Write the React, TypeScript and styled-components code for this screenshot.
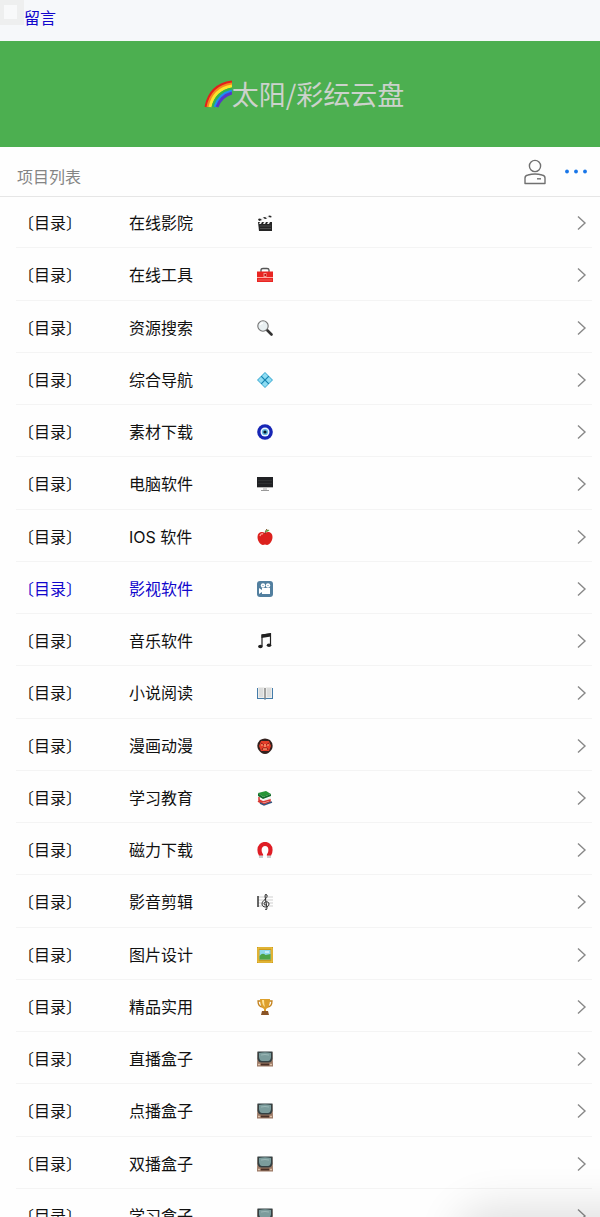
import React from "react";
import styled, { createGlobalStyle } from "styled-components";

const GlobalStyle = createGlobalStyle`
  * { box-sizing: border-box; }
  body {
    margin: 0;
    background: #fefefe;
    color: #111;
    font-family: Inter, "Noto Sans CJK SC", sans-serif;
    font-size: 16px;
  }
`;

const Page = styled.div`
  display: flex;
  flex-direction: column;
  height: 100vh;
  overflow: hidden;
`;

const TopBar = styled.nav`
  display: flex;
  align-items: flex-start;
  flex: none;
  height: 41px;
  background: #f6f8fa;
`;

const Thumb = styled.span`
  width: 24px;
  height: 25px;
  border: 5px solid #eeefef;
  border-width: 5px 7px 6px 4px;
  background: #f8f9fa;
`;

const MessageLink = styled.a`
  padding-top: 6px;
  line-height: 24px;
  color: #1207cc;
  text-decoration: none;
`;

const Banner = styled.header`
  display: flex;
  align-items: center;
  justify-content: center;
  flex: none;
  height: 106px;
  padding-left: 8px;
  background: #4caf50;
`;

const Title = styled.h1`
  display: flex;
  align-items: center;
  margin: 0;
  font-size: 27px;
  font-weight: 400;
  line-height: 40px;
  color: #ccd2cc;
  font-family: "Noto Sans CJK SC", sans-serif;
`;

const SectionBar = styled.div`
  display: flex;
  align-items: center;
  justify-content: space-between;
  flex: none;
  height: 50px;
  padding: 0 12px 0 17px;
  border-bottom: 1px solid #e6e6e6;
`;

const SectionTitle = styled.h2`
  margin: 0;
  padding-top: 10px;
  font-size: 16px;
  font-weight: 400;
  line-height: 24px;
  color: #858585;
`;

const Actions = styled.div`
  display: flex;
  align-items: center;
  gap: 11px;
`;

const IconButton = styled.button`
  display: flex;
  align-items: center;
  justify-content: center;
  padding: 0;
  border: 0;
  background: none;
  cursor: pointer;
`;

const List = styled.ul`
  flex: 1;
  min-height: 0;
  margin: 0;
  padding: 0 8px 0 16px;
  overflow-y: auto;
  scrollbar-width: none;
  list-style: none;
`;

const Item = styled.li`
  height: 52px;
  border-bottom: 1px solid #f4f4f4;

  &:first-child { height: 51px; }
  &:nth-child(4n + 2) { height: 53px; }
`;

const RowLink = styled.a<{ $visited?: boolean }>`
  display: grid;
  grid-template-columns: 111px 128px 1fr 12px;
  align-items: center;
  height: 100%;
  padding: 2px 4px 0 2px;
  line-height: 24px;
  color: ${(p) => (p.$visited ? "#1207cc" : "#111")};
  text-decoration: none;

  svg { display: block; }
`;

const CornerShade = styled.div`
  position: fixed;
  right: -60px;
  bottom: -44px;
  width: 190px;
  height: 40px;
  border-radius: 20px;
  box-shadow: 0 0 44px 14px rgba(0, 0, 0, 0.12);
  pointer-events: none;
`;

const Rainbow = styled.svg`
  flex: none;
  width: 28px;
  height: 28px;
`;

const rainbowBands = [
  ["#e3201b", 0],
  ["#f58a1f", 2],
  ["#fbe62b", 4],
  ["#35b34a", 7],
  ["#1d8ff0", 9],
  ["#5636c9", 11],
] as const;

const glyphs: Record<string, React.ReactNode> = {
  clapper: (
    <>
      <path d="M1 7h14v9H2z" fill="#252525" />
      <path d="M1 4l13-4 1 2-13 4z" fill="#eee" />
      <path d="M1 4l2-.6 2 1.500-3 1zM6 2.500l2-.6 2 1.500-2 .6zM11 1l2-.6 2 1.600-2 .5z" fill="#222" />
      <path d="M3 7h2L4 9H2zM7 7h2L8 9H6zM11 7h2l-1 2h-2z" fill="#eee" />
      <path d="M3 11h11M3 13.500h11" stroke="#666" strokeWidth=".6" />
    </>
  ),
  toolbox: (
    <>
      <path d="M4 5V3q0-1.500 2-1.500h4q2 0 2 1.500v2" fill="none" stroke="#555" strokeWidth="1.300" />
      <path d="M0 4.500h16V15H0z" fill="#e92522" />
      <path d="M0 10.500h16" stroke="#ffaaa4" />
      <path d="M1 13h14" stroke="#f77c74" strokeWidth=".7" />
      <path d="M6.500 6h3v4h-3z" fill="#f59a91" />
      <path d="M7.500 7h1.500v2H7.500z" fill="#b71514" />
    </>
  ),
  search: (
    <>
      <path d="M10 10l4.500 4.500" stroke="#333" strokeWidth="2.600" strokeLinecap="round" />
      <circle cx="6" cy="6" r="5.200" fill="#e9f0f2" stroke="#747474" strokeWidth="1.100" />
      <path d="M3 5q1-2 3-2" fill="none" stroke="#fff" strokeWidth="1.300" />
    </>
  ),
  diamond: (
    <>
      <path d="M8 0l8 8-8 8-8-8z" fill="#34a6cf" />
      <path d="M8 1l3 3-3 3-3-3zM12 5l3 3-3 3-3-3zM4 5l3 3-3 3-3-3zM8 9l3 3-3 3-3-3z" fill="#8fdcf2" />
      <path d="M4 4l8 8M12 4l-8 8" stroke="#187da8" strokeWidth=".8" />
    </>
  ),
  eye: (
    <>
      <circle cx="8" cy="8" r="7.800" fill="#1726b5" />
      <circle cx="8" cy="8" r="4.500" fill="#f0f8ff" />
      <circle cx="8" cy="8" r="3.100" fill="#63b9dc" />
      <circle cx="8" cy="8" r="1.600" fill="#071629" />
    </>
  ),
  desktop: (
    <>
      <path d="M0 1h16v11H0z" fill="#b7b7b7" />
      <path d="M0 1h16v10H0z" fill="#202124" />
      <path d="M1 4.500h14M1 7.500h14" stroke="#35363a" strokeWidth=".7" />
      <path d="M6 12h4v2H6z" fill="#d4d4d4" />
      <path d="M4 14.500h8" stroke="#999" />
    </>
  ),
  apple: (
    <>
      <path d="M8 4C5 2 .5 3 .5 8c0 4 3 8 5.500 8l2-.6 2 .6c2.500 0 5.500-4 5.500-8 0-5-4.500-6-7.500-4z" fill="#dc211d" />
      <path d="M3 7q1-3 3-2" fill="none" stroke="#ff978a" strokeWidth="1.500" />
      <path d="M8 5q0-3 2-5" fill="none" stroke="#764620" />
      <path d="M8.500 3q1-3 4-2-1 2-4 2z" fill="#55a736" />
    </>
  ),
  cinema: (
    <>
      <rect width="16" height="16" rx="3" fill="#527f9f" />
      <circle cx="6" cy="4.500" r="2.200" fill="#fff" />
      <circle cx="11" cy="4.500" r="2.200" fill="#fff" />
      <path d="M5 7h8v6H5v-2l-3 2V7l3 2z" fill="#fff" />
      <circle cx="6" cy="4.500" r=".6" fill="#527f9f" />
      <circle cx="11" cy="4.500" r=".6" fill="#527f9f" />
    </>
  ),
  music: (
    <>
      <path d="M5 13V2l8.500-1v11" fill="none" stroke="#202020" strokeWidth="1.200" />
      <path d="M4.500 1.500l9.500-1.500v3.500L4.500 5z" fill="#202020" />
      <ellipse cx="3.400" cy="13.500" rx="2.300" ry="1.700" fill="#202020" />
      <ellipse cx="12" cy="12.300" rx="2.300" ry="1.700" fill="#202020" />
    </>
  ),
  book: (
    <>
      <path d="M0 3h16v11H9l-1 1-1-1H0z" fill="#447caa" />
      <path d="M1 2h6l1 1 1-1h6v11H9l-1 1-1-1H1z" fill="#ededeb" />
      <path d="M8 3v11" stroke="#555" />
      <path d="M3 3v9M5 3v9M11 3v9M13 3v9" stroke="#c2c4c5" strokeWidth=".8" />
    </>
  ),
  ogre: (
    <>
      <path d="M3 2q5-3 10 0 4 4 2 9-3 5-7 5t-7-5Q-1 6 3 2z" fill="#33201d" />
      <path d="M4 3h8l2 5-2 5H4L2 8z" fill="#e33d29" />
      <path d="M4 5l3 2M12 5L9 7M5 12l1-2h4l1 2" fill="none" stroke="#8f1d18" />
      <path d="M4 7h2M10 7h2M6 11h4" stroke="#ffd59d" strokeWidth=".8" />
      <path d="M8 6v3" stroke="#ff9a75" strokeWidth="1.500" />
    </>
  ),
  books: (
    <>
      <path d="M1 3l8-2 5 3-8 3z" fill="#269537" />
      <path d="M1 3v3l5 3 8-3V4L6 7z" fill="#126d2b" />
      <path d="M2 8l4 2 8-3v2l-8 3-4-2z" fill="#eee" />
      <path d="M2 7v3l4 2 7-2v2l-7 2-5-3" fill="none" stroke="#d93832" strokeWidth="1.500" />
      <path d="M3 13l4 2 8-3" fill="none" stroke="#35557e" strokeWidth="1.500" />
    </>
  ),
  magnet: (
    <>
      <path d="M4 14v-1Q2.500 11 2.500 8c0-8 11-8 11 0q0 3-1.500 5v1" fill="none" stroke="#df1d25" strokeWidth="4.200" />
      <path d="M2 13.500h4V16H2zM10 13.500h4V16h-4z" fill="#c9cdcf" />
    </>
  ),
  score: (
    <>
      <path d="M1 3h15M1 6h15M1 9h15M1 12h15" stroke="#bbb" strokeWidth=".7" />
      <path d="M1 2v11" stroke="#333" strokeWidth="1.500" />
      <path d="M8 15q2 2 2-1L8 2q0-3 2-1c1 4-5 5-5 9 0 4 7 4 7 0 0-3-5-3-5 0q0 1 2 1" fill="none" stroke="#292929" />
    </>
  ),
  picture: (
    <>
      <path d="M0 0h16v16H0z" fill="#cf9b1c" />
      <path d="M1 1h14v14H1z" fill="none" stroke="#f0ca4c" />
      <path d="M2.500 3h11v9.500h-11z" fill="#8fd9ed" />
      <path d="M2.500 9q3-4 6-1l5-1v5.500h-11z" fill="#4ca448" />
      <path d="M8 5h4" stroke="#fff" />
    </>
  ),
  trophy: (
    <>
      <path d="M4 2H1q0 6 5 6M12 2h3q0 6-5 6" fill="none" stroke="#c4821c" strokeWidth="1.300" />
      <path d="M3 0h10q0 8-4 10v3H7v-3Q3 8 3 0z" fill="#dda02c" />
      <path d="M5 1h2q0 4 1 7-3-2-3-7z" fill="#ffe295" />
      <path d="M5 12h6l1 4H4z" fill="#895325" />
    </>
  ),
  tv: (
    <>
      <path d="M.5 1h15L16 15.500H0z" fill="#9a7763" />
      <path d="M.5 .5h15V8q-1 3.500-4 3.500h-7Q1.500 11.500.5 8z" fill="#344043" />
      <path d="M2 2q6-1.500 12 0v4q-.5 4-3 4H5Q2.500 10 2 6z" fill="#7b9c9c" />
      <path d="M4 4q4-1 8 0" fill="none" stroke="#9bb8b7" />
      <path d="M4 13.500h8" stroke="#4a3027" strokeWidth="1.800" />
      <path d="M1 13.500h2M13 13.500h2" stroke="#dcc0a8" strokeWidth="1.500" />
    </>
  ),
};

const items = [
  ["在线影院", "clapper"],
  ["在线工具", "toolbox"],
  ["资源搜索", "search"],
  ["综合导航", "diamond"],
  ["素材下载", "eye"],
  ["电脑软件", "desktop"],
  ["IOS 软件", "apple"],
  ["影视软件", "cinema"],
  ["音乐软件", "music"],
  ["小说阅读", "book"],
  ["漫画动漫", "ogre"],
  ["学习教育", "books"],
  ["磁力下载", "magnet"],
  ["影音剪辑", "score"],
  ["图片设计", "picture"],
  ["精品实用", "trophy"],
  ["直播盒子", "tv"],
  ["点播盒子", "tv"],
  ["双播盒子", "tv"],
  ["学习盒子", "tv"],
];

export default function App() {
  return (
    <Page>
      <GlobalStyle />
      <TopBar>
        <Thumb />
        <MessageLink href="#message">留言</MessageLink>
      </TopBar>
      <Banner>
        <Title>
          <Rainbow viewBox="0 0 28 28" aria-hidden="true">
            {rainbowBands.map(([color, inset]) => (
              <path
                key={color}
                d={`M${2 + inset} 27Q${6 + inset} ${5 + inset} 28 ${2 + inset}`}
                fill="none"
                stroke={color}
                strokeWidth="3"
              />
            ))}
          </Rainbow>
          太阳/彩纭云盘
        </Title>
      </Banner>
      <SectionBar>
        <SectionTitle>项目列表</SectionTitle>
        <Actions>
          <IconButton type="button" aria-label="用户">
            <svg width="36" height="28" viewBox="0 0 36 28" fill="none" stroke="#707070" strokeWidth="1.400">
              <circle cx="18" cy="8" r="5.600" />
              <path d="M8 25.500V20Q8 17.500 11 17Q18 15 25 17Q28 17.500 28 20V25.500Z" strokeLinejoin="round" />
              <path d="M20 20.800h4" />
            </svg>
          </IconButton>
          <IconButton type="button" aria-label="更多">
            <svg width="24" height="28" viewBox="0 0 24 28" fill="#1976e8">
              <circle cx="3" cy="13.500" r="1.900" />
              <circle cx="12" cy="13.500" r="1.900" />
              <circle cx="21" cy="13.500" r="1.900" />
            </svg>
          </IconButton>
        </Actions>
      </SectionBar>
      <List>
        {items.map(([name, glyph]) => (
          <Item key={name}>
            <RowLink href="#folder" $visited={name === "影视软件"}>
              <span>〔目录〕</span>
              <span>{name}</span>
              <svg width="16" height="16" viewBox="0 0 16 16" aria-hidden="true">
                {glyphs[glyph]}
              </svg>
              <svg width="12" height="16" viewBox="0 0 12 16" fill="none" stroke="#888" strokeWidth="1.400" aria-hidden="true">
                <path d="M2 1.500L9 8l-7 6.500" />
              </svg>
            </RowLink>
          </Item>
        ))}
      </List>
      <CornerShade />
    </Page>
  );
}
